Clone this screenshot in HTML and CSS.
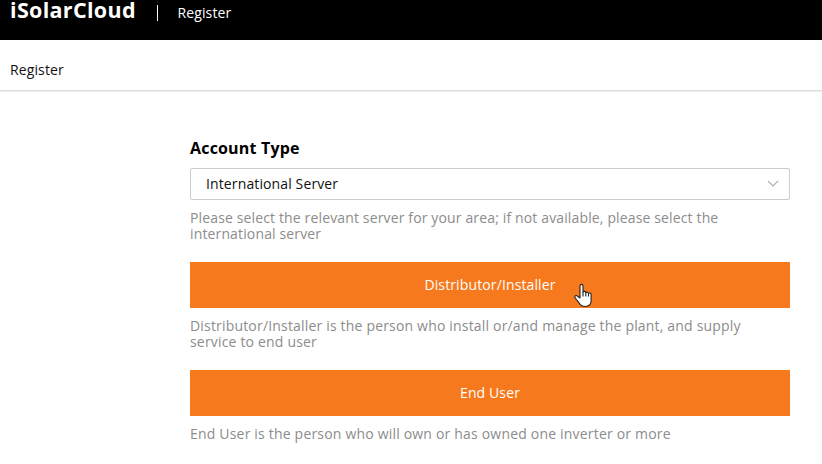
FILE: index.html
```html
<!DOCTYPE html>
<html lang="en">
<head>
<meta charset="utf-8">
<title>Register</title>
<link rel="stylesheet" href="styles.css">
</head>
<body>
<header class="topbar">
  <span class="brand">iSolarCloud</span>
  <span class="divider"></span>
  <span class="section">Register</span>
</header>
<nav class="crumb"><span class="crumb-text">Register</span></nav>
<main class="form">
  <h1 class="title"><span>Account Type</span></h1>
  <div class="select">
    <span class="value">International Server</span>
    <svg class="chevron" width="12" height="8" viewBox="0 0 12 8"><path d="M1 1l5 5 5-5" fill="none" stroke="#b0b0b4" stroke-width="1.2"/></svg>
  </div>
  <p class="hint hint-server">Please select the relevant server for your area; if not available, please select the<br>international server</p>
  <button class="choice"><span class="choice-label">Distributor/Installer</span>
    <svg class="pointer" width="19" height="25" viewBox="0 0 19 25"><path d="M6 15V3.2C6 .8 9 .8 9 3.2V9c.5-1 2.6-.8 2.8.6.7-.9 2.5-.5 2.7.7.8-.7 2.6-.3 2.6 1.4v6.1c0 3.6-2 5.7-5.8 5.7-3 0-4.8-1.2-6.1-3.3L1.2 15c-1-2 .8-3.3 2.4-1.8z" fill="#fff" stroke="#222" stroke-width="1.1" stroke-linejoin="round"/><path d="M9 9v4.5M11.8 9.6v4M14.5 10.3v3.3" stroke="#222" stroke-width="1.1"/></svg>
  </button>
  <p class="hint hint-dist">Distributor/Installer is the person who install or/and manage the plant, and supply<br>service to end user</p>
  <button class="choice"><span class="choice-label">End User</span></button>
  <p class="hint hint-user">End User is the person who will own or has owned one inverter or more</p>
</main>
</body>
</html>
```
FILE: styles.css
```css
* { box-sizing: border-box; }
body {
  margin: 0;
  height: 464px;
  overflow: hidden;
  background: #fff;
  color: #111;
  font: 14px/16px "Open Sans", "Noto Sans", sans-serif;
  letter-spacing: 0.12px;
}
.topbar {
  display: flex;
  height: 40px;
  padding-left: 10px;
  background: #000;
  color: #fff;
}
.brand {
  width: 126px;
  font: bold 21.5px/19px "Open Sans", sans-serif;
  letter-spacing: 0.32px;
  white-space: nowrap;
}
.divider {
  width: 1px;
  height: 16px;
  margin: 5px 19.5px 0 21px;
  background: #fff;
}
.section { margin-top: 5px; }
.crumb {
  height: 51px;
  padding: 22px 10px 0;
  border-bottom: 1px solid #dcdcdc;
  box-shadow: 0 1px 1px #f0f0f0;
}
.form { width: 600px; margin: 47px 0 0 190px; }
.title {
  height: 30px;
  margin: 0;
  color: #000;
  font-size: 16px;
  line-height: 20px;
  letter-spacing: 0.18px;
}
.select {
  display: flex;
  align-items: center;
  justify-content: space-between;
  height: 32px;
  padding: 0 10px 0 15px;
  border: 1px solid #ccc;
  border-radius: 2px;
}
.hint {
  height: 46px;
  margin: 10px 0 6px;
  color: #8c8c8c;
  white-space: nowrap;
}
.hint-server { letter-spacing: 0.14px; }
.hint-dist { letter-spacing: 0.18px; }
.hint-user { letter-spacing: 0.19px; }
.choice {
  position: relative;
  display: block;
  width: 600px;
  height: 46px;
  padding: 0;
  border: 0;
  background: #f7791d;
  color: #fff;
  font: inherit;
  letter-spacing: 0.12px;
}
.pointer { position: absolute; left: 384px; top: 21px; }
```
